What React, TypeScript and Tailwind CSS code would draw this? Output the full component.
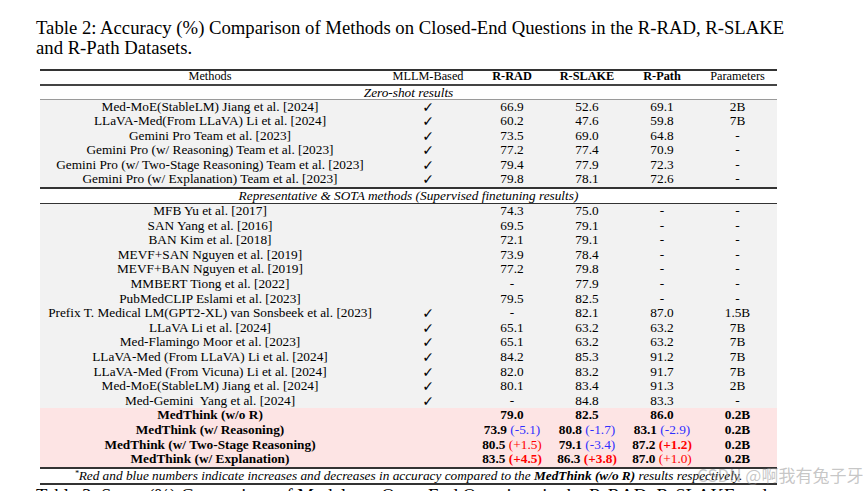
type Row = [string, boolean, string, string, string, string];

const ZERO_SHOT: Row[] = [
  ["Med-MoE(StableLM) Jiang et al. [2024]", true, "66.9", "52.6", "69.1", "2B"],
  ["LLaVA-Med(From LLaVA) Li et al. [2024]", true, "60.2", "47.6", "59.8", "7B"],
  ["Gemini Pro Team et al. [2023]", true, "73.5", "69.0", "64.8", "-"],
  ["Gemini Pro (w/ Reasoning) Team et al. [2023]", true, "77.2", "77.4", "70.9", "-"],
  ["Gemini Pro (w/ Two-Stage Reasoning) Team et al. [2023]", true, "79.4", "77.9", "72.3", "-"],
  ["Gemini Pro (w/ Explanation) Team et al. [2023]", true, "79.8", "78.1", "72.6", "-"],
];

const SUPERVISED: Row[] = [
  ["MFB Yu et al. [2017]", false, "74.3", "75.0", "-", "-"],
  ["SAN Yang et al. [2016]", false, "69.5", "79.1", "-", "-"],
  ["BAN Kim et al. [2018]", false, "72.1", "79.1", "-", "-"],
  ["MEVF+SAN Nguyen et al. [2019]", false, "73.9", "78.4", "-", "-"],
  ["MEVF+BAN Nguyen et al. [2019]", false, "77.2", "79.8", "-", "-"],
  ["MMBERT Tiong et al. [2022]", false, "-", "77.9", "-", "-"],
  ["PubMedCLIP Eslami et al. [2023]", false, "79.5", "82.5", "-", "-"],
  ["Prefix T. Medical LM(GPT2-XL) van Sonsbeek et al. [2023]", true, "-", "82.1", "87.0", "1.5B"],
  ["LLaVA Li et al. [2024]", true, "65.1", "63.2", "63.2", "7B"],
  ["Med-Flamingo Moor et al. [2023]", true, "65.1", "63.2", "63.2", "7B"],
  ["LLaVA-Med (From LLaVA) Li et al. [2024]", true, "84.2", "85.3", "91.2", "7B"],
  ["LLaVA-Med (From Vicuna) Li et al. [2024]", true, "82.0", "83.2", "91.7", "7B"],
  ["Med-MoE(StableLM) Jiang et al. [2024]", true, "80.1", "83.4", "91.3", "2B"],
  ["Med-Gemini  Yang et al. [2024]", true, "-", "84.8", "83.3", "-"],
];

// [value, delta, up?, bold delta?]
type Cell = [string, string?, boolean?, boolean?];
const OURS: { name: string; cells: Cell[] }[] = [
  { name: "MedThink (w/o R)", cells: [["79.0"], ["82.5"], ["86.0"]] },
  {
    name: "MedThink (w/ Reasoning)",
    cells: [["73.9", "(-5.1)", false], ["80.8", "(-1.7)", false], ["83.1", "(-2.9)", false]],
  },
  {
    name: "MedThink (w/ Two-Stage Reasoning)",
    cells: [["80.5", "(+1.5)", true], ["79.1", "(-3.4)", false], ["87.2", "(+1.2)", true, true]],
  },
  {
    name: "MedThink (w/ Explanation)",
    cells: [["83.5", "(+4.5)", true, true], ["86.3", "(+3.8)", true, true], ["87.0", "(+1.0)", true]],
  },
];

const GRID = "grid grid-cols-[340px_96px_72px_78px_72px_79px] text-center";

function Check() {
  return <span className="font-['DejaVu_Sans'] text-[14px] font-bold">✓</span>;
}

function DataRow({ r }: { r: Row }) {
  return (
    <div className={`${GRID} h-[14.6px] leading-[14.6px] bg-[#f2f2f2]`}>
      <div className="whitespace-pre">{r[0]}</div>
      <div>{r[1] ? <Check /> : null}</div>
      <div>{r[2]}</div>
      <div>{r[3]}</div>
      <div>{r[4]}</div>
      <div>{r[5]}</div>
    </div>
  );
}

export default function App() {
  return (
    <div className="relative h-[491px] w-[865px] overflow-hidden bg-white font-['Liberation_Serif',serif] text-black">
      <div className="pl-[36px] pt-[18px] text-[18.7px] leading-[20px]">
        Table 2: Accuracy (%) Comparison of Methods on Closed-End Questions in the R-RAD, R-SLAKE
        <br />
        and R-Path Datasets.
      </div>

      <div className="ml-[40px] mt-[11px] w-[737px] text-[13.3px]">
        <div className="h-[2px] bg-[#333]" />
        <div className={`${GRID} h-[13px] leading-[10px] text-[12.3px]`}>
          <div>Methods</div>
          <div>MLLM-Based</div>
          <div className="font-bold">R-RAD</div>
          <div className="font-bold">R-SLAKE</div>
          <div className="font-bold">R-Path</div>
          <div>Parameters</div>
        </div>
        <div className="h-[1.5px] bg-[#444]" />
        <div className="h-[13px] text-center italic leading-[13px]">Zero-shot results</div>
        <div className="h-px bg-[#9a9a9a]" />
        {ZERO_SHOT.map((r, i) => (
          <DataRow key={i} r={r} />
        ))}
        <div className="h-[2px] bg-[#333]" />
        <div className="h-[13.5px] text-center italic leading-[13.5px]">
          Representative &amp; SOTA methods (Supervised finetuning results)
        </div>
        <div className="h-[1.5px] bg-[#333]" />
        {SUPERVISED.map((r, i) => (
          <DataRow key={i} r={r} />
        ))}
        {OURS.map((o) => (
          <div key={o.name} className={`${GRID} h-[14.6px] bg-[#fde4e4] leading-[14.6px]`}>
            <div className="font-bold">{o.name}</div>
            <div />
            {o.cells.map(([v, d, up, b], j) => (
              <div key={j}>
                <span className="font-bold">{v}</span>
                {d ? (
                  <span className={`${up ? "text-[#ff0000]" : "text-[#3030ff]"} ${b ? "font-bold" : ""}`}>
                    {" "}
                    {d}
                  </span>
                ) : null}
              </div>
            ))}
            <div className="font-bold">0.2B</div>
          </div>
        ))}
        <div className="h-[2px] bg-[#333]" />
        <div className="h-[14px] text-center italic leading-[14px]">
          <sup className="text-[8px]">*</sup>
          Red and blue numbers indicate increases and decreases in accuracy compared to the{" "}
          <b>MedThink (w/o R)</b> results respectively.
        </div>
        <div className="h-[2px] bg-[#333]" />
      </div>

      <div className="whitespace-nowrap pl-[36px] pt-[1px] text-[18.7px] leading-[20px]">
        Table 3: Score (%) Comparison of Models on Open-End Questions in the R-RAD, R-SLAKE and
      </div>

      <div className="absolute left-[697px] top-[462px] font-['Noto_Sans_CJK_SC',sans-serif] text-[17px] text-[rgba(150,150,150,0.55)]">
        CSDN @啊我有兔子牙
      </div>
    </div>
  );
}
